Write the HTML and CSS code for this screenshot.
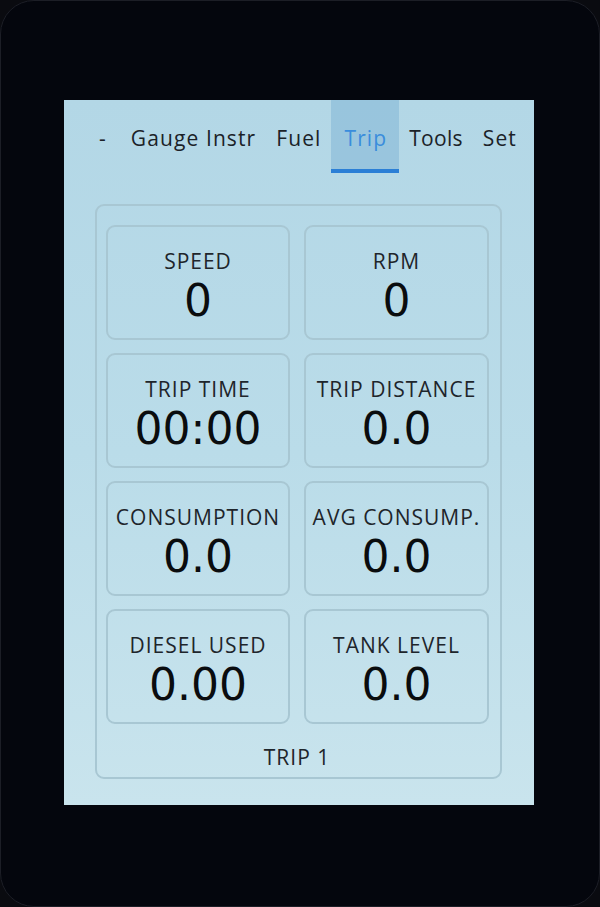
FILE: index.html
```html
<!DOCTYPE html>
<html lang="en">
<head>
<meta charset="utf-8">
<title>Trip</title>
<link rel="stylesheet" href="styles.css">
</head>
<body>
<div class="device">
  <div class="screen">
    <nav class="tabs">
      <div class="tab tab-dash">-</div>
      <div class="tab">Gauge Instr</div>
      <div class="tab">Fuel</div>
      <div class="tab active">Trip</div>
      <div class="tab tab-tight">Tools</div>
      <div class="tab">Set</div>
    </nav>
    <section class="panel">
      <div class="grid">
        <div class="cell"><div class="label">SPEED</div><div class="value">0</div></div>
        <div class="cell"><div class="label">RPM</div><div class="value">0</div></div>
        <div class="cell"><div class="label">TRIP TIME</div><div class="value">00:00</div></div>
        <div class="cell"><div class="label">TRIP DISTANCE</div><div class="value">0.0</div></div>
        <div class="cell"><div class="label">CONSUMPTION</div><div class="value">0.0</div></div>
        <div class="cell"><div class="label">AVG CONSUMP.</div><div class="value">0.0</div></div>
        <div class="cell"><div class="label">DIESEL USED</div><div class="value">0.00</div></div>
        <div class="cell"><div class="label">TANK LEVEL</div><div class="value">0.0</div></div>
      </div>
      <div class="footer">TRIP 1</div>
    </section>
  </div>
</div>
</body>
</html>
```

FILE: styles.css
```css
* { box-sizing: border-box; }
html, body { margin: 0; padding: 0; background: #0a0b10; }
body { width: 600px; height: 907px; overflow: hidden; }

.device {
  width: 600px;
  height: 907px;
  background: #04060d;
  border-radius: 34px;
  border: 1px solid #1c1e26;
  padding: 99px 0 0 63px;
}

.screen {
  width: 470px;
  height: 705px;
  background: linear-gradient(180deg, #b3d7e6 0%, #badce9 50%, #c9e4ed 100%);
  font-family: "Open Sans", "Noto Sans", sans-serif;
  color: #1b2228;
  display: flex;
  flex-direction: column;
}

.tabs {
  height: 73px;
  display: flex;
  align-items: stretch;
  padding-left: 25px;
}
.tab {
  display: flex;
  align-items: center;
  padding: 6px 10px 0 10px;
  font-size: 21px;
  letter-spacing: 1.1px;
  border-bottom: 4px solid transparent;
}
.tab-dash { padding-right: 14px; }
.tab-tight { letter-spacing: 0.3px; }
.tab.active {
  color: #3a8ddc;
  background: rgba(120, 175, 210, 0.45);
  border-bottom-color: #2b7fd6;
  padding: 6px 12px 0 13px;
}

.panel {
  margin: 31px 0 0 31px;
  width: 407px;
  height: 575px;
  border: 2px solid #a8c7d3;
  border-radius: 9px;
  padding: 19px 12px 0 9px;
  display: flex;
  flex-direction: column;
}

.grid {
  display: grid;
  grid-template-columns: 184px 185px;
  grid-auto-rows: 115px;
  column-gap: 14px;
  row-gap: 13px;
}

.cell {
  border: 2px solid #a8c7d3;
  border-radius: 9px;
  display: flex;
  flex-direction: column;
  align-items: center;
  padding-top: 22px;
}
.label {
  font-size: 21px;
  line-height: 24px;
  letter-spacing: 1px;
  color: #1e252b;
  white-space: nowrap;
}
.value {
  font-family: "DejaVu Sans", sans-serif;
  font-size: 44px;
  line-height: 44px;
  color: #0a0c0e;
  margin-top: 6px;
}

.footer {
  text-align: center;
  font-size: 21px;
  letter-spacing: 1px;
  margin-top: 19px;
  color: #1e252b;
}
```
